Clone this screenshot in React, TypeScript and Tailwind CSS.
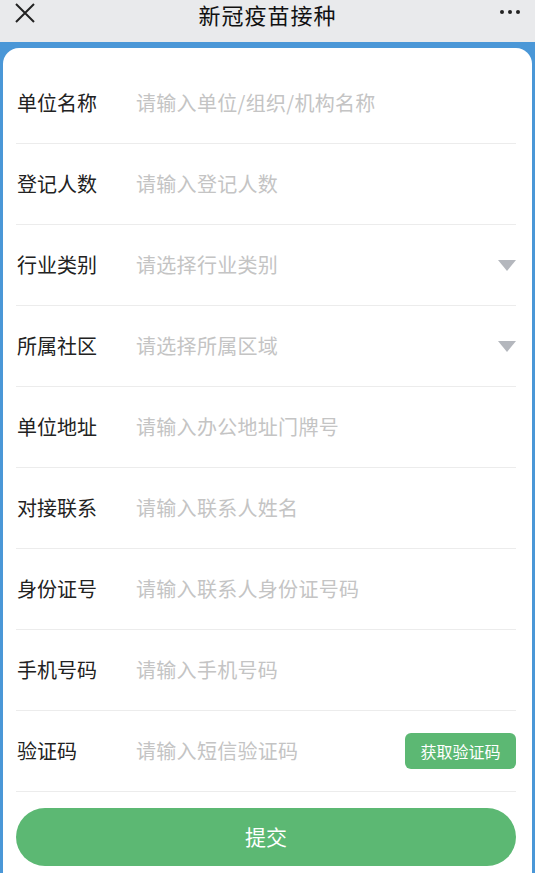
const fields: { label: string; placeholder: string; select?: boolean; code?: boolean }[] = [
  { label: '单位名称', placeholder: '请输入单位/组织/机构名称' },
  { label: '登记人数', placeholder: '请输入登记人数' },
  { label: '行业类别', placeholder: '请选择行业类别', select: true },
  { label: '所属社区', placeholder: '请选择所属区域', select: true },
  { label: '单位地址', placeholder: '请输入办公地址门牌号' },
  { label: '对接联系', placeholder: '请输入联系人姓名' },
  { label: '身份证号', placeholder: '请输入联系人身份证号码' },
  { label: '手机号码', placeholder: '请输入手机号码' },
  { label: '验证码', placeholder: '请输入短信验证码', code: true },
]

function Row({ label, placeholder, select, code }: (typeof fields)[number]) {
  return (
    <div className="flex h-[81px] items-center border-b border-[#ececec]">
      <span className="w-[120px] shrink-0 pl-[1px] text-[20px] text-[#222]">{label}</span>
      <span className="flex-1 text-[20px] tracking-[0.3px] text-[#c4c4c4]">{placeholder}</span>
      {select && (
        <svg width="18" height="11" viewBox="0 0 18 11">
          <path d="M0 0 H18 L9 11 Z" fill="#b4b7bd" />
        </svg>
      )}
      {code && (
        <button className="flex h-[36px] w-[111px] items-center justify-center rounded-[6px] bg-[#5cb873] text-[16px] text-white">
          获取验证码
        </button>
      )}
    </div>
  )
}

export default function App() {
  return (
    <div
      className="flex h-[873px] w-[535px] flex-col overflow-hidden bg-[#4a97d7]"
      style={{ fontFamily: '"Noto Sans CJK SC", "Noto Sans", sans-serif' }}
    >
      <header className="relative flex h-[42px] shrink-0 items-start justify-center bg-[#e9eaec] pt-[2px]">
        <svg width="22" height="22" viewBox="0 0 22 22" className="absolute left-[14px] top-[2px]">
          <path d="M2 2 L20 20 M20 2 L2 20" stroke="#222" strokeWidth="2" />
        </svg>
        <h1 className="text-[22px] leading-[24px] tracking-[1px] text-[#111]">新冠疫苗接种</h1>
        <div className="absolute right-[15px] top-[10px] flex gap-[4px]">
          <span className="h-[4px] w-[4px] rounded-full bg-[#222]" />
          <span className="h-[4px] w-[4px] rounded-full bg-[#222]" />
          <span className="h-[4px] w-[4px] rounded-full bg-[#222]" />
        </div>
      </header>
      <main className="mx-[3px] mt-[6px] flex-1 rounded-t-[16px] bg-white pl-[13px] pr-[16px] pt-[15px]">
        {fields.map((f) => (
          <Row key={f.label} {...f} />
        ))}
        <button className="mt-[16px] flex h-[58px] w-full items-center justify-center rounded-full bg-[#5cb873] text-[21px] text-white">
          提交
        </button>
      </main>
    </div>
  )
}
